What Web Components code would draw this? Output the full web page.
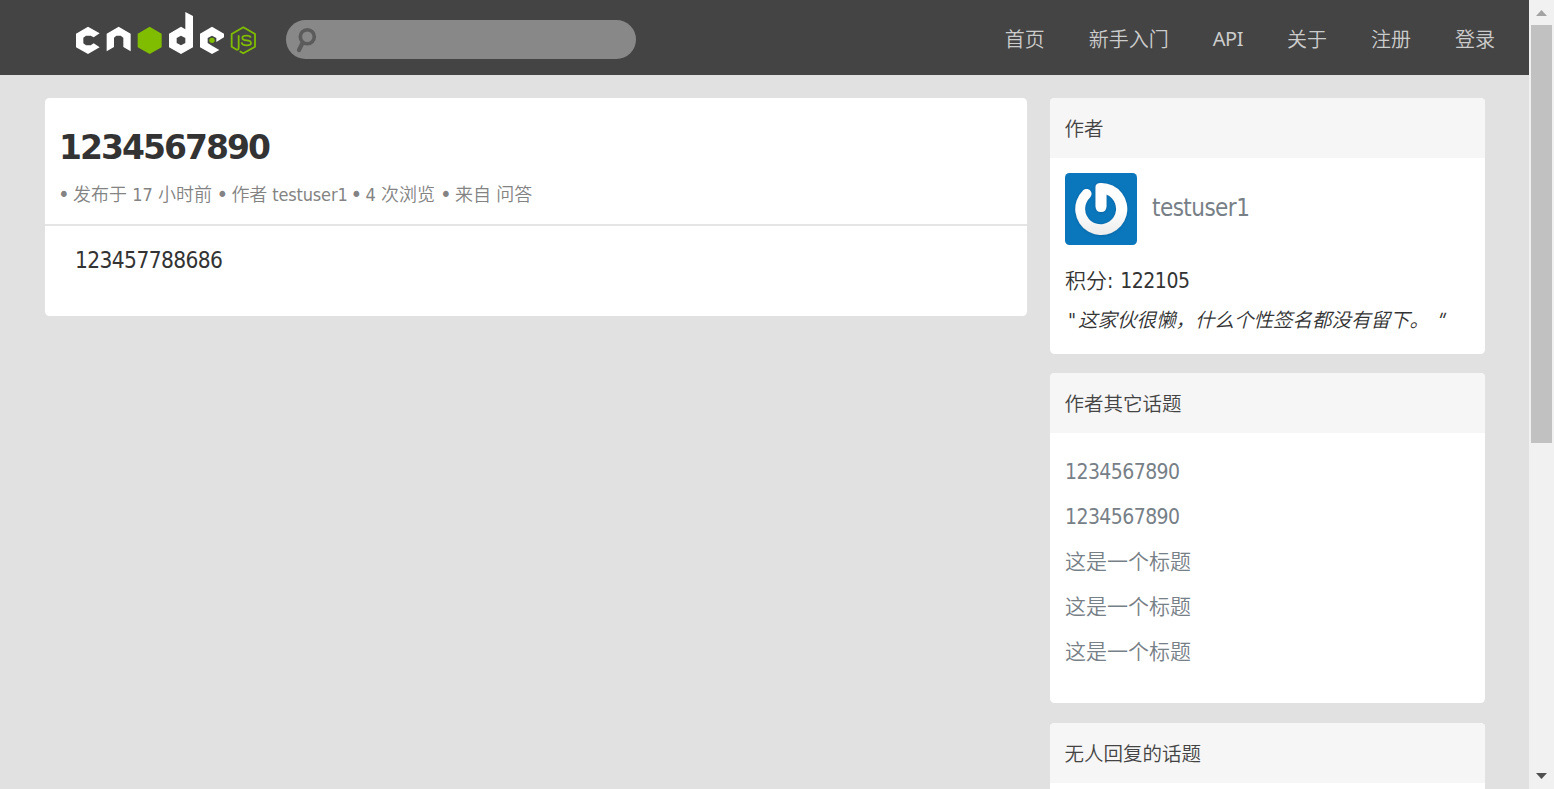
<!DOCTYPE html>
<html lang="zh-CN">
<head>
<meta charset="utf-8">
<title>1234567890 - CNode</title>
<style>
html,body{margin:0;height:789px;overflow:hidden;background:#e1e1e1}
body{font-family:"DejaVu Sans Condensed","DejaVu Sans","Noto Sans CJK SC DemiLight","Noto Sans CJK SC Light","Noto Sans CJK SC",sans-serif;font-stretch:condensed;font-size:21px;color:#333}
</style>
</head>
<body>
<cnode-app></cnode-app>
<script>
function define(name, html) {
  const t = document.createElement('template');
  t.innerHTML = html;
  customElements.define(name, class extends HTMLElement {
    constructor() {
      super();
      this.attachShadow({mode: 'open'}).appendChild(t.content.cloneNode(true));
    }
  });
}

define('cnode-logo', `
<style>:host{display:block;width:210px;height:75px}svg{display:block}</style>
<svg width="210" height="75" viewBox="0 0 630 225">
  <g fill="#fff" fill-rule="evenodd">
    <path d="M84 80L119 100L101 112L92 107H78L70 113V130L78 136H92L101 130L119 142L84 162L48 142V101Z"/>
    <path d="M176 80L212 101V154L190 141V113L182 107H169L162 113V141L140 154V101Z"/>
    <path d="M363 80L376 88V36L399 48V142L363 162L327 142V101ZM363 107L350 114V129L363 136L376 129V114Z"/>
    <path d="M456 80L492 101V112L469 126V114L456 107L443 114V129L456 137L478 150L456 162L420 142V101Z"/>
  </g>
  <path fill="#80bd01" d="M269 80L305 101V142L269 162L233 142V101Z"/>
  <circle cx="456" cy="121" r="8" fill="#80bd01"/>
  <g fill="none" stroke="#80bd01" stroke-width="5.400" stroke-linejoin="round">
    <path d="M536 106V143Q536 151 528 148L515 140V102L550 82L585 102V140L550 160L539 154"/>
    <path d="M572 113Q571 107 560 107Q547 107 547 114Q547 120 560 121Q573 122 573 129Q573 136 560 136Q546 136 545 127"/>
  </g>
</svg>`);

define('search-box', `
<style>
:host{display:block;width:350px;height:39px;border-radius:19.5px;background:#888}
svg{display:block}
</style>
<svg width="40" height="39" fill="none" stroke="#5b5b5b" stroke-linecap="round"><circle cx="21.3" cy="16.8" r="7" stroke-width="3.6"/><path d="M16.5 23L13 30" stroke-width="4.2"/></svg>`);

define('nav-link', `
<style>
:host{display:block;line-height:30px;font-size:20px;color:#ccc;white-space:nowrap}
</style><slot></slot>`);

define('nav-bar', `
<style>
:host{display:flex;box-sizing:border-box;height:75px;background:#444;padding:0 34px 0 60px;align-items:flex-start}
search-box{margin:20px 0 0 16px}
nav{margin:25px 0 0 auto;display:flex;gap:44px}
.latin{font-family:"Noto Sans",sans-serif;letter-spacing:-.5px;line-height:28px}
</style>
<cnode-logo></cnode-logo><search-box></search-box>
<nav><nav-link>首页</nav-link><nav-link>新手入门</nav-link><nav-link class="latin">API</nav-link><nav-link>关于</nav-link><nav-link>注册</nav-link><nav-link>登录</nav-link></nav>`);

define('topic-article', `
<style>
:host{display:block;box-sizing:border-box;height:218px;border-radius:4.5px;background:#fff;overflow:hidden}
header{box-sizing:border-box;height:128px;padding:29px 15px 0 14px;border-bottom:2px solid #e5e5e5}
h1{margin:0;font:bold 33px/42px "DejaVu Sans",sans-serif;letter-spacing:-1.97px}
.meta{margin-top:12px;font-size:18px;line-height:28px;color:#838383;white-space:nowrap;display:flex}
.body{padding:16px 30px;font-size:22.5px;line-height:36px;letter-spacing:-.6px}
</style>
<header><h1><slot name="title"></slot></h1><div class="meta"><slot name="meta"></slot></div></header>
<div class="body"><slot></slot></div>`);

define('meta-item', `
<style>
:host{display:flex;white-space:pre;height:28px}
i{font-style:normal;font-size:22px;width:15px;margin-left:-1px;flex:none}
</style><i>•</i><slot></slot>`);

define('side-panel', `
<style>
:host{display:block;border-radius:4.5px;background:#fff;overflow:hidden}
header{height:60px;line-height:63px;padding:0 14.500px;background:#f6f6f6;font-size:19.5px;color:#444}
.inner{padding:15px}
</style>
<header><slot name="title"></slot></header><div class="inner"><slot></slot></div>`);

define('user-avatar', `
<style>:host{display:block;width:72px;height:72px;border-radius:4.5px;overflow:hidden}svg{display:block}</style>
<svg width="72" height="72">
  <defs><linearGradient id="g" x1="0" y1="0" x2="0" y2="1"><stop offset=".5" stop-color="#fff"/><stop offset="1" stop-color="#ececec"/></linearGradient>
  <filter id="s" x="-20%" y="-20%" width="140%" height="140%"><feDropShadow dx="0" dy=".4" stdDeviation=".9" flood-color="#064a78" flood-opacity=".45"/></filter></defs>
  <rect width="72" height="72" fill="#0a76bb"/>
  <path filter="url(#s)" fill="url(#g)" d="M30.500 14Q30.500 10 36 10A26 26 0 1 1 18 17.500C23 13 29.500 19.500 25 24.500A15.500 15.500 0 1 0 41.500 21.500V33.500Q41 39 36 39Q31 39 30.500 33.500Z"/>
</svg>`);

define('author-card', `
<style>
:host{display:block;height:166px}
.user{display:flex;gap:15px}
.name{font-size:24px;line-height:70px;color:#778087;letter-spacing:-.55px}
.score{margin-top:21px;line-height:30px;font-size:21px;letter-spacing:-.45px;word-spacing:1.700px}
.score b{font-weight:400;letter-spacing:0}
.sign{font-style:italic;font-size:19.5px;line-height:30px;margin-top:10px;white-space:pre;padding-left:3px}
.open{font-style:normal}
.text{margin-left:2px}
.close{margin-left:8px;display:inline-block;transform:skewX(-20deg)}
</style>
<div class="user"><user-avatar></user-avatar><span class="name">testuser1</span></div>
<div class="score"><b>积分</b>: 122105</div>
<div class="sign"><span class="open">"</span><span class="text">这家伙很懒，什么个性签名都没有留下。</span><span class="close">"</span></div>`);

define('topic-link', `
<style>:host{display:block;line-height:30px;color:#778087;white-space:nowrap}</style><slot></slot>`);

define('topic-list', `
<style>:host{display:flex;flex-direction:column;gap:15px;height:224px;padding:9px 0 7px}
.num{letter-spacing:-.57px}</style>
<topic-link class="num">1234567890</topic-link><topic-link class="num">1234567890</topic-link><topic-link>这是一个标题</topic-link><topic-link>这是一个标题</topic-link><topic-link>这是一个标题</topic-link>`);

define('scroll-bar', `
<style>
:host{display:grid;grid-template-rows:25px 1fr 25px;box-sizing:border-box;width:25px;height:789px;background:#f1f1f1;padding:0 2px}
.thumb{height:418px;background:#c1c1c1}
svg{display:block}
</style>
<svg width="21" height="25"><path d="M5 16h11l-5.500-6z" fill="#a3a3a3"/></svg><div class="thumb"></div><svg width="21" height="25"><path d="M5 9h11l-5.500 6z" fill="#505050"/></svg>`);

define('cnode-app', `
<style>
:host{display:grid;grid-template-columns:1529px 25px;height:789px;overflow:hidden}
.page{height:789px;overflow:hidden}
main{display:grid;grid-template-columns:982px 435px;gap:23px;padding:23px 45px;align-items:start}
aside{display:flex;flex-direction:column}
.author{height:256px;margin-bottom:19px}
.topics{height:330px;margin-bottom:20px}
.fill{height:100px}
</style>
<div class="page">
<nav-bar></nav-bar>
<main>
<topic-article><span slot="title">1234567890</span>
<meta-item slot="meta" style="width:158.500px">发布于 17 小时前</meta-item><meta-item slot="meta" style="width:134px;letter-spacing:-.15px">作者 testuser1</meta-item><meta-item slot="meta" style="width:89.500px">4 次浏览</meta-item><meta-item slot="meta">来自 问答</meta-item>123457788686</topic-article>
<aside>
<side-panel class="author"><span slot="title">作者</span><author-card></author-card></side-panel>
<side-panel class="topics"><span slot="title">作者其它话题</span><topic-list></topic-list></side-panel>
<side-panel><span slot="title">无人回复的话题</span><div class="fill"></div></side-panel>
</aside>
</main>
</div>
<scroll-bar></scroll-bar>`);
</script>
</body>
</html>
